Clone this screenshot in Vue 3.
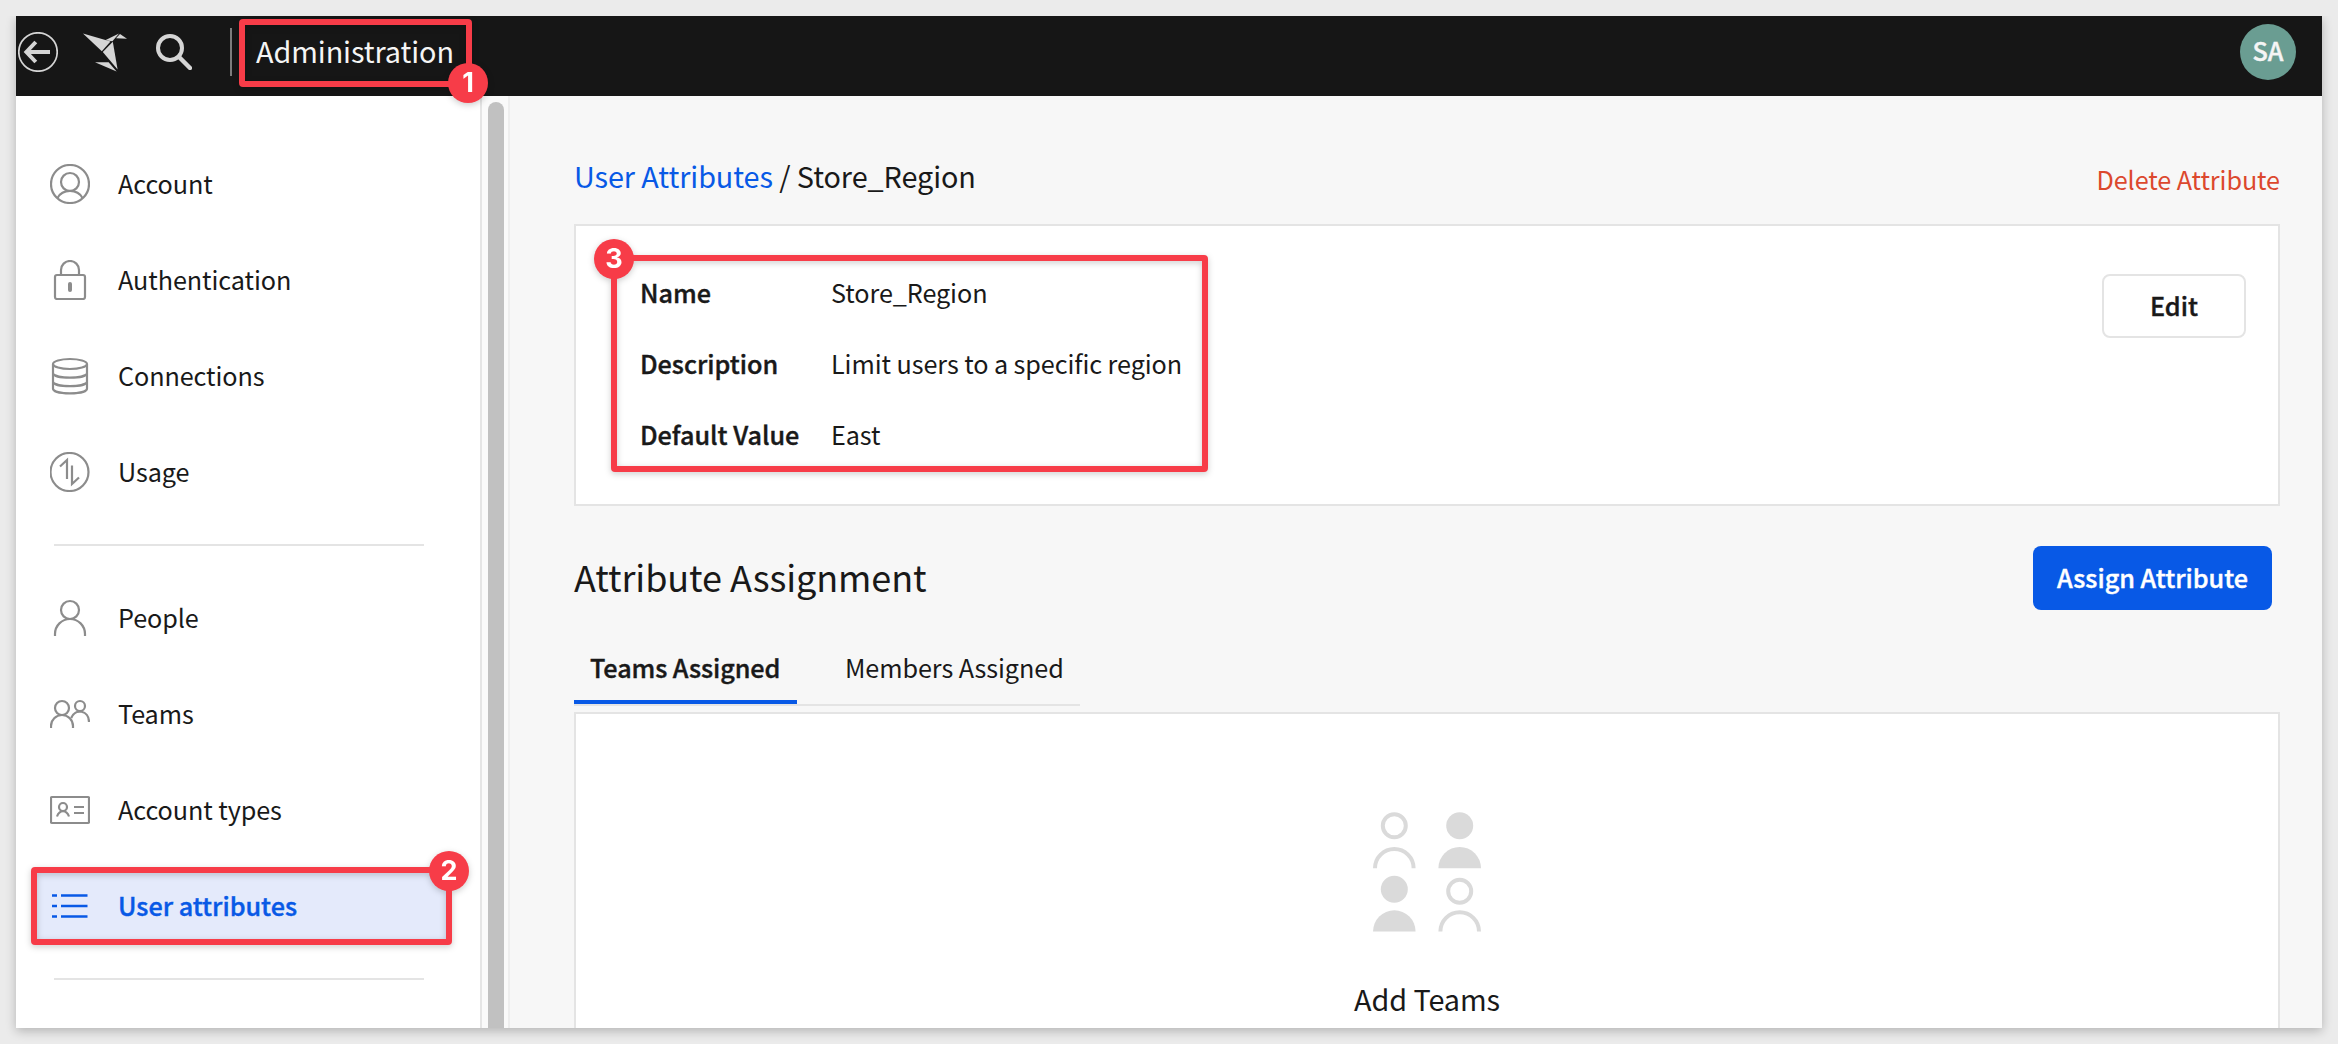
<script setup>
const accountItems = [
  { id: 'account', label: 'Account' },
  { id: 'auth', label: 'Authentication' },
  { id: 'connections', label: 'Connections' },
  { id: 'usage', label: 'Usage' },
]
const memberItems = [
  { id: 'people', label: 'People' },
  { id: 'teams', label: 'Teams' },
  { id: 'types', label: 'Account types' },
  { id: 'attributes', label: 'User attributes', active: true },
]
const groups = [accountItems, memberItems]
const fields = [
  { name: 'Name', value: 'Store_Region' },
  { name: 'Description', value: 'Limit users to a specific region' },
  { name: 'Default Value', value: 'East' },
]
</script>

<template>
  <div class="page">
    <div class="window">
      <header class="topbar">
        <svg class="back" viewBox="0 0 40 40" fill="none" stroke="#d5d5d5">
          <circle cx="20" cy="20" r="19.2" stroke-width="1.7" />
          <path d="M32 20H9M17.8 10L8.4 20l9.4 10" stroke-width="4" />
        </svg>
        <svg class="bird" viewBox="0 0 44 40" fill="#d5d5d5">
          <path d="M0 .5L27.5 8.5L18.8 18.2Z" />
          <path d="M22.2 7.2L36 .6L29.4 8.2Z" />
          <path d="M37 1L44 5.8L33 5.2Z" />
          <path d="M29.8 8.8L34.6 36.6L19.8 19Z" />
          <path d="M12 29.2L25.6 29.2L33.6 38.4Z" />
        </svg>
        <svg class="search" viewBox="0 0 36 36" fill="none" stroke="#d5d5d5">
          <circle cx="14" cy="14" r="12" stroke-width="4" />
          <path d="M22.8 22.8L34 34" stroke-width="4.4" stroke-linecap="round" />
        </svg>
        <span class="rule"></span>
        <span class="title">Administration</span>
        <span class="avatar"><span>SA</span></span>
      </header>

      <div class="body">
        <aside class="sidebar">
          <nav v-for="(group, g) in groups" :key="g" class="group">
            <a v-for="item in group" :key="item.id" class="item" :class="{ active: item.active }">
              <svg class="icon" viewBox="0 0 40 40" fill="none" stroke="currentColor" stroke-width="2.2">
                <template v-if="item.id === 'account'">
                  <circle cx="20" cy="20" r="19" />
                  <circle cx="20" cy="18" r="9" />
                  <path d="M7.5 34C12.5 24.500 27.5 24.500 32.500 34" />
                </template>
                <template v-else-if="item.id === 'auth'">
                  <rect x="5" y="15" width="30" height="24" rx="2" />
                  <path d="M11 15V10a9 9 0 0 1 18 0V15" />
                  <path d="M20 24V30" stroke-width="4" stroke-linecap="round" />
                </template>
                <template v-else-if="item.id === 'connections'">
                  <ellipse cx="20" cy="8" rx="17" ry="5" />
                  <path d="M3 8V32.500C3 39 37 39 37 32.500V8M3 17.500C5 23 35 23 37 17.500M3 26C5 31.500 35 31.500 37 26" />
                </template>
                <template v-else-if="item.id === 'usage'">
                  <circle cx="19.500" cy="20" r="19" />
                  <path d="M10 14.500L17 8V27M22 13.500V32L29 25.500" />
                </template>
                <template v-else-if="item.id === 'people'">
                  <circle cx="20" cy="12" r="9" />
                  <path d="M5 38V36a15 15 0 0 1 30 0V38" />
                </template>
                <template v-else-if="item.id === 'teams'">
                  <circle cx="12" cy="14" r="7" />
                  <path d="M1 34V32a11 11 0 0 1 22 0V34" />
                  <circle cx="30" cy="12" r="5" />
                  <path d="M21.200 24C25 14 39 16 39 28" />
                </template>
                <template v-else-if="item.id === 'types'">
                  <rect x="1" y="7" width="38" height="26" rx="1" />
                  <circle cx="13" cy="17" r="4" />
                  <path d="M7 26.500C9.500 19.500 16.500 19.500 19 26.500M24 17H34M24 23H34" />
                </template>
                <template v-else>
                  <path d="M2 9.500H7M2 20H7M2 30.500H7M11 9.500H37.5M11 20H37.5M11 30.500H37.5" stroke-width="2.500" />
                </template>
              </svg>
              <span class="label">{{ item.label }}</span>
            </a>
          </nav>
        </aside>
        <div class="scroll"><div class="thumb"></div></div>

        <main class="content">
          <div class="crumbs">
            <div class="path"><a>User Attributes</a> / Store_Region</div>
            <a class="delete">Delete Attribute</a>
          </div>
          <section class="card details">
            <dl>
              <div v-for="f in fields" :key="f.name" class="field">
                <dt>{{ f.name }}</dt>
                <dd>{{ f.value }}</dd>
              </div>
            </dl>
            <button class="edit">Edit</button>
          </section>
          <div class="heading">
            <h2>Attribute Assignment</h2>
            <button class="assign">Assign Attribute</button>
          </div>
          <div class="tabs">
            <a class="tab on">Teams Assigned</a>
            <a class="tab">Members Assigned</a>
          </div>
          <section class="card empty">
            <svg class="crowd" viewBox="0 0 108 120" fill="#dadada">
              <g fill="none" stroke="#dadada" stroke-width="4">
                <circle cx="21.300" cy="13.800" r="11.500" />
                <path d="M2 56.200a19.300 19.300 0 0 1 38.600 0" />
                <circle cx="86.700" cy="79.200" r="11.500" />
                <path d="M67.400 119.600a19.300 19.300 0 0 1 38.600 0" />
              </g>
              <circle cx="86.700" cy="13.700" r="13.500" />
              <path d="M65.400 56.200a21.300 21.300 0 0 1 42.600 0Z" />
              <circle cx="21.300" cy="77.200" r="13.500" />
              <path d="M0 119.600a21.300 21.300 0 0 1 42.600 0Z" />
            </svg>
            <p>Add Teams</p>
          </section>
        </main>
      </div>
    </div>

    <div class="mark m1"><span class="badge">1</span></div>
    <div class="mark m2"><span class="badge">2</span></div>
    <div class="mark m3"><span class="badge">3</span></div>
  </div>
</template>

<style>
body { background: #ebebeb; }
</style>

<style scoped>
* { box-sizing: border-box; margin: 0; padding: 0; }
.page {
  position: relative;
  width: 2338px;
  height: 1044px;
  padding: 16px;
  overflow: hidden;
  background: #ebebeb;
  color: #191919;
  font: 25.2px/36px "Noto Sans CJK SC", "Noto Sans", sans-serif;
  letter-spacing: -0.08px;
  white-space: nowrap;
}
.window {
  display: flex;
  flex-direction: column;
  width: 2306px;
  height: 1012px;
  background: #f7f7f7;
  box-shadow: 0 3px 10px rgba(0, 0, 0, 0.24);
  clip-path: inset(0 -16px -16px -16px);
}
.topbar {
  display: flex;
  align-items: center;
  flex: none;
  height: 80px;
  padding: 0 26px 8px 2px;
  background: #161616;
  color: #f5f5f5;
}
.back { width: 40px; height: 40px; }
.bird { width: 44px; height: 40px; margin-left: 25px; margin-top: 2px; }
.search { width: 36px; height: 36px; margin-left: 29px; }
.rule { width: 2px; height: 48px; margin-left: 38px; background: #7c7c7c; }
.title { margin: -3px 0 0 24px; font-size: 28.8px; line-height: 40px; }
.avatar {
  display: flex;
  align-items: center;
  justify-content: center;
  width: 56px;
  height: 56px;
  margin-left: auto;
  border-radius: 50%;
  background: #6a9d92;
  font-weight: 500;
  -webkit-text-stroke: 0.4px;
}
.avatar span { margin-top: -4px; }
.body { display: flex; flex: 1; min-height: 0; overflow: hidden; }
.sidebar {
  width: 466px;
  flex: none;
  padding-top: 40px;
  overflow: hidden;
  background: #fff;
  border-right: 2px solid #e5e5e5;
}
.group { display: flex; flex-direction: column; height: 410px; }
.group::after {
  content: "";
  flex: none;
  width: 370px;
  height: 2px;
  margin: 24px 0 0 38px;
  background: #e4e4e4;
}
.group + .group { margin-top: 24px; }
.item {
  display: flex;
  align-items: center;
  flex: none;
  height: 96px;
  padding-left: 34px;
}
.icon { flex: none; width: 40px; height: 40px; color: #8c8c8c; }
.label { margin: -2px 0 0 28px; }
.active {
  height: 76px;
  margin: 10px 0 10px 16px;
  width: 416px;
  padding-left: 18px;
  background: #e4eafb;
  color: #0859e6;
  letter-spacing: 0;
}
.active .icon { color: #0859e6; }
.active .label { font-weight: 500; -webkit-text-stroke: 0.4px; }
.scroll {
  flex: none;
  width: 28px;
  padding: 6px 0 0 6px;
  background: #fafafa;
  border-right: 2px solid #eee;
}
.thumb { width: 16px; height: 940px; border-radius: 8px; background: #c1c1c1; }
.content {
  flex: 1;
  display: flex;
  flex-direction: column;
  padding: 0 42px 0 64px;
}
.crumbs {
  display: flex;
  justify-content: space-between;
  flex: none;
  height: 128px;
  padding-top: 60px;
}
.path { font-size: 28.8px; line-height: 40px; }
.path a { color: #0859e6; }
.delete { margin-top: 5px; color: #dc482d; }
.card { background: #fff; border: 2px solid #e4e4e4; }
.details {
  flex: none;
  display: flex;
  justify-content: space-between;
  height: 282px;
  padding: 48px 32px 0 64px;
}
.field { display: flex; height: 71px; }
dt {
  width: 191px;
  font-weight: 500;
  letter-spacing: 0;
  -webkit-text-stroke: 0.4px;
}
button {
  font: inherit;
  font-weight: 500;
  letter-spacing: 0;
  -webkit-text-stroke: 0.4px;
}
.edit {
  width: 144px;
  height: 64px;
  padding-bottom: 2px;
  border: 2px solid #e4e4e4;
  border-radius: 8px;
  background: #fff;
  color: #191919;
}
.heading {
  display: flex;
  justify-content: space-between;
  flex: none;
  height: 134px;
  padding: 40px 8px 0 0;
}
h2 { margin-top: 4px; font-size: 36px; font-weight: 400; line-height: 52px; }
.assign {
  width: 239px;
  height: 64px;
  padding-bottom: 2px;
  border: 0;
  border-radius: 8px;
  background: #0859e6;
  color: #fff;
}
.tabs {
  display: flex;
  flex: none;
  gap: 32px;
  width: 506px;
  height: 66px;
  margin-bottom: 6px;
  border-bottom: 2px solid #e4e4e4;
}
.tab { width: 250px; padding: 9px 0 0 16px; }
.on {
  width: 223px;
  border-bottom: 4px solid #0859e6;
  font-weight: 500;
  -webkit-text-stroke: 0.4px;
}
.empty {
  flex: 1;
  display: flex;
  flex-direction: column;
  align-items: center;
  min-height: 0;
  padding-top: 98px;
  border-bottom: 0;
}
.crowd { flex: none; width: 108px; height: 120px; }
.empty p { margin-top: 47px; font-size: 28.8px; line-height: 40px; }
.mark {
  position: absolute;
  border: 6px solid #f73c48;
  border-radius: 4px;
  filter: drop-shadow(0 2px 3px rgba(0, 0, 0, 0.2));
}
.m1 { left: 239px; top: 19px; width: 233px; height: 68px; }
.m2 { left: 31px; top: 867px; width: 421px; height: 78px; }
.m3 { left: 611px; top: 255px; width: 597px; height: 217px; }
.badge {
  position: absolute;
  display: flex;
  align-items: center;
  justify-content: center;
  width: 40px;
  height: 40px;
  border-radius: 50%;
  background: #f73c48;
  color: #fff;
  font: 700 27px/40px Inter, sans-serif;
}
.m1 .badge { left: 203px; top: 38px; }
.m2 .badge { left: 392px; top: -22px; }
.m3 .badge { left: -23px; top: -22px; }
</style>
